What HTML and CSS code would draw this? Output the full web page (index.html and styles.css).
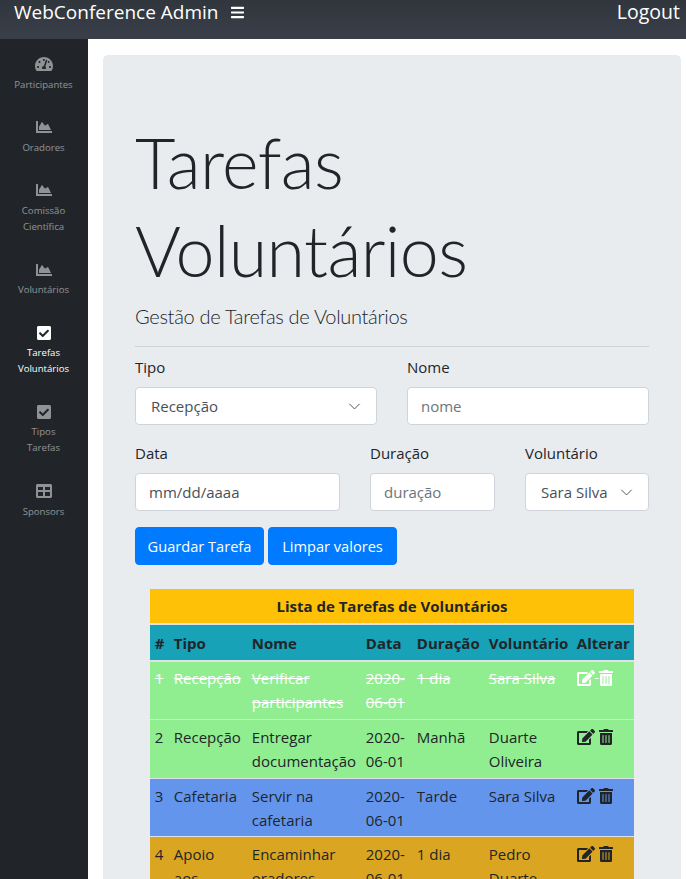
FILE: index.html
```html
<!DOCTYPE html>
<html lang="pt">
<head>
<meta charset="utf-8">
<title>Tarefas Voluntários</title>
<link rel="stylesheet" href="styles.css">
</head>
<body>
<svg class="defs" aria-hidden="true">
  <symbol id="i-bars" viewBox="0 0 448 512"><path d="M16 132h416c8.837 0 16-7.163 16-16V76c0-8.837-7.163-16-16-16H16C7.163 60 0 67.163 0 76v40c0 8.837 7.163 16 16 16zm0 160h416c8.837 0 16-7.163 16-16v-40c0-8.837-7.163-16-16-16H16c-8.837 0-16 7.163-16 16v40c0 8.837 7.163 16 16 16zm0 160h416c8.837 0 16-7.163 16-16v-40c0-8.837-7.163-16-16-16H16c-8.837 0-16 7.163-16 16v40c0 8.837 7.163 16 16 16z"/></symbol>
  <symbol id="i-gauge" viewBox="0 0 576 512"><path d="M288 32C128.94 32 0 160.94 0 320c0 52.8 14.25 102.26 39.06 144.8 5.61 9.62 16.3 15.2 27.44 15.2h443c11.14 0 21.83-5.58 27.44-15.2C561.75 422.26 576 372.8 576 320c0-159.06-128.94-288-288-288zm0 64c14.71 0 26.58 10.13 30.32 23.65-1.11 2.26-2.64 4.23-3.45 6.67l-9.22 27.67c-5.13 3.49-10.97 6.01-17.64 6.01-17.67 0-32-14.33-32-32S270.33 96 288 96zM96 384c-17.67 0-32-14.33-32-32s14.33-32 32-32 32 14.33 32 32-14.33 32-32 32zm48-160c-17.67 0-32-14.33-32-32s14.33-32 32-32 32 14.33 32 32-14.33 32-32 32zm246.77-72.41l-61.33 184C343.13 347.33 352 364.54 352 384c0 11.72-3.38 22.55-8.88 32H232.88c-5.5-9.45-8.88-20.28-8.88-32 0-33.94 26.5-61.43 59.9-63.59l61.34-184.01c4.17-12.56 17.73-19.45 30.36-15.17 12.57 4.19 19.35 17.79 15.17 30.36zm14.66 57.2l15.52-46.55c3.47-1.29 7.13-2.23 11.05-2.23 17.67 0 32 14.33 32 32s-14.33 32-32 32c-11.38-.01-20.89-6.28-26.57-15.22zM480 384c-17.67 0-32-14.33-32-32s14.33-32 32-32 32 14.33 32 32-14.33 32-32 32z"/></symbol>
  <symbol id="i-area" viewBox="0 0 512 512"><path d="M500 384c6.6 0 12 5.4 12 12v40c0 6.6-5.4 12-12 12H12c-6.6 0-12-5.4-12-12V76c0-6.6 5.4-12 12-12h40c6.6 0 12 5.4 12 12v308h436zM372.7 159.5L288 216l-85.3-113.7c-5.1-6.8-15.5-6.3-19.9 1L96 248v104h384l-89.9-187.8c-3.2-6.5-11.4-8.7-17.4-4.7z"/></symbol>
  <symbol id="i-check" viewBox="0 0 448 512"><path d="M400 480H48c-26.51 0-48-21.49-48-48V80c0-26.51 21.49-48 48-48h352c26.51 0 48 21.49 48 48v352c0 26.51-21.49 48-48 48zm-204.686-98.059l184-184c6.248-6.248 6.248-16.379 0-22.627l-22.627-22.627c-6.248-6.248-16.379-6.249-22.628 0L184 302.745l-70.059-70.059c-6.248-6.248-16.379-6.248-22.628 0L68.686 255.313c-6.249 6.248-6.249 16.379 0 22.627l104 104c6.249 6.25 16.379 6.25 22.628.001z"/></symbol>
  <symbol id="i-grid" viewBox="0 0 512 512"><path fill-rule="evenodd" d="M48 32h416c26.5 0 48 21.5 48 48v352c0 26.5-21.500 48-48 48H48c-26.500 0-48-21.500-48-48V80c0-26.500 21.500-48 48-48zM64 128v96h160v-96zm224 0v96h160v-96zM64 288v128h160V288zm224 0v128h160V288z"/></symbol>
  <symbol id="i-edit" viewBox="0 0 576 512"><path d="M402.6 83.2l90.2 90.2c3.8 3.8 3.8 10 0 13.8L274.4 405.6l-92.8 10.3c-12.4 1.4-22.9-9.1-21.5-21.5l10.3-92.8L388.8 83.2c3.8-3.8 10-3.8 13.8 0zm162-22.9l-48.8-48.8c-15.2-15.2-39.9-15.2-55.2 0l-35.4 35.4c-3.8 3.8-3.8 10 0 13.8l90.2 90.2c3.8 3.8 10 3.8 13.8 0l35.4-35.4c15.2-15.3 15.2-40 0-55.2zM384 346.2V448H64V128h229.8c3.2 0 6.2-1.3 8.5-3.5l40-40c7.6-7.6 2.2-20.5-8.5-20.5H48C21.5 64 0 85.5 0 112v352c0 26.5 21.5 48 48 48h352c26.5 0 48-21.5 48-48V306.2c0-10.7-12.9-16-20.5-8.5l-40 40c-2.2 2.3-3.5 5.3-3.5 8.5z"/></symbol>
  <symbol id="i-trash" viewBox="0 0 448 512"><path d="M32 464a48 48 0 0 0 48 48h288a48 48 0 0 0 48-48V128H32zm272-256a16 16 0 0 1 32 0v224a16 16 0 0 1-32 0zm-96 0a16 16 0 0 1 32 0v224a16 16 0 0 1-32 0zm-96 0a16 16 0 0 1 32 0v224a16 16 0 0 1-32 0zM432 32H312l-9.4-18.7A24 24 0 0 0 281.1 0H166.8a23.72 23.72 0 0 0-21.4 13.3L136 32H16A16 16 0 0 0 0 48v32a16 16 0 0 0 16 16h416a16 16 0 0 0 16-16V48a16 16 0 0 0-16-16z"/></symbol>
  <symbol id="i-chevron" viewBox="0 0 16 16"><path fill="none" stroke="#4b5157" stroke-width="1.2" stroke-linecap="round" stroke-linejoin="round" d="M2 5l6 6 6-6"/></symbol>
</svg>

<header class="topbar">
  <div class="brand-group">
    <span class="brand">WebConference Admin</span>
    <svg class="bars"><use href="#i-bars"/></svg>
  </div>
  <a class="logout">Logout</a>
</header>

<div class="shell">
  <nav class="sidebar">
    <a class="side-item"><svg class="side-icon"><use href="#i-gauge"/></svg><span>Participantes</span></a>
    <a class="side-item"><svg class="side-icon"><use href="#i-area"/></svg><span>Oradores</span></a>
    <a class="side-item"><svg class="side-icon"><use href="#i-area"/></svg><span>Comissão<br>Científica</span></a>
    <a class="side-item"><svg class="side-icon"><use href="#i-area"/></svg><span>Voluntários</span></a>
    <a class="side-item active"><svg class="side-icon"><use href="#i-check"/></svg><span>Tarefas<br>Voluntários</span></a>
    <a class="side-item"><svg class="side-icon"><use href="#i-check"/></svg><span>Tipos<br>Tarefas</span></a>
    <a class="side-item"><svg class="side-icon"><use href="#i-grid"/></svg><span>Sponsors</span></a>
  </nav>

  <main class="content">
    <section class="jumbotron">
      <h1 class="title">Tarefas Voluntários</h1>
      <p class="lead">Gestão de Tarefas de Voluntários</p>
      <hr class="rule">
      <form class="form">
        <div class="form-row row-two">
          <div class="field">
            <label class="label">Tipo</label>
            <div class="control select">Recepção<svg class="chevron"><use href="#i-chevron"/></svg></div>
          </div>
          <div class="field">
            <label class="label">Nome</label>
            <div class="control placeholder">nome</div>
          </div>
        </div>
        <div class="form-row row-three">
          <div class="field">
            <label class="label">Data</label>
            <div class="control date">mm/dd/aaaa</div>
          </div>
          <div class="field">
            <label class="label">Duração</label>
            <div class="control placeholder">duração</div>
          </div>
          <div class="field">
            <label class="label">Voluntário</label>
            <div class="control select">Sara Silva<svg class="chevron"><use href="#i-chevron"/></svg></div>
          </div>
        </div>
        <div class="actions">
          <button type="button" class="btn">Guardar Tarefa</button>
          <button type="button" class="btn">Limpar valores</button>
        </div>
      </form>

      <div class="table-wrap">
        <table class="tasks">
          <colgroup>
            <col class="c-num"><col class="c-tipo"><col class="c-nome"><col class="c-data"><col class="c-dur"><col class="c-vol"><col class="c-alt">
          </colgroup>
          <thead>
            <tr class="head-title"><th colspan="7">Lista de Tarefas de Voluntários</th></tr>
            <tr class="head-cols"><th>#</th><th>Tipo</th><th>Nome</th><th>Data</th><th>Duração</th><th>Voluntário</th><th>Alterar</th></tr>
          </thead>
          <tbody>
            <tr class="green done">
              <td>1</td><td>Recepção</td><td>Verificar participantes</td><td>2020-06-01</td><td>1 dia</td><td>Sara Silva</td>
              <td class="tools"><svg class="tool edit"><use href="#i-edit"/></svg> <svg class="tool trash"><use href="#i-trash"/></svg></td>
            </tr>
            <tr class="green">
              <td>2</td><td>Recepção</td><td>Entregar documentação</td><td>2020-06-01</td><td>Manhã</td><td>Duarte Oliveira</td>
              <td class="tools"><svg class="tool edit"><use href="#i-edit"/></svg> <svg class="tool trash"><use href="#i-trash"/></svg></td>
            </tr>
            <tr class="blue">
              <td>3</td><td>Cafetaria</td><td>Servir na cafetaria</td><td>2020-06-01</td><td>Tarde</td><td>Sara Silva</td>
              <td class="tools"><svg class="tool edit"><use href="#i-edit"/></svg> <svg class="tool trash"><use href="#i-trash"/></svg></td>
            </tr>
            <tr class="gold">
              <td>4</td><td>Apoio aos oradores</td><td>Encaminhar oradores</td><td>2020-06-01</td><td>1 dia</td><td>Pedro Duarte</td>
              <td class="tools"><svg class="tool edit"><use href="#i-edit"/></svg> <svg class="tool trash"><use href="#i-trash"/></svg></td>
            </tr>
          </tbody>
        </table>
      </div>
    </section>
  </main>
</div>
</body>
</html>
```

FILE: styles.css
```css
* { box-sizing: border-box; }

html, body {
  margin: 0;
  height: 879px;
  overflow: hidden;
}

body {
  font-family: "Open Sans", "Noto Sans", sans-serif;
  font-size: 15px;
  line-height: 24px;
  color: #212529;
  background: #fff;
}

.defs { display: none; }

.topbar {
  height: 39px;
  display: flex;
  justify-content: space-between;
  padding: 0 6px 15px 14px;
  background: linear-gradient(#30363c, #3a3f4a);
  color: #fff;
  font-size: 19px;
}

.brand-group {
  display: flex;
  gap: 13px;
  align-items: center;
}

.bars {
  width: 13px;
  height: 15px;
  fill: #fff;
}

.logout {
  color: #fff;
  font-size: 19.5px;
}

.shell {
  display: flex;
  height: 840px;
}

.sidebar {
  width: 88px;
  flex: none;
  background: #212529;
  padding: 17px 1px 0 0;
  display: flex;
  flex-direction: column;
  gap: 26.7px;
}

.side-item {
  display: flex;
  flex-direction: column;
  align-items: center;
  text-align: center;
  color: rgba(255, 255, 255, 0.5);
  font-size: 9.6px;
  line-height: 16px;
}

.side-item.active { color: #fff; }

.side-icon {
  width: 18px;
  height: 16px;
  margin-bottom: 4.5px;
  fill: currentColor;
}

.content {
  flex: 1;
  padding: 16px 5px 0 15px;
  min-width: 0;
}

.jumbotron {
  background: #e9ecef;
  border-radius: 5px;
  padding: 64px 32px 32px;
  height: 900px;
}

.title {
  margin: 0;
  font-family: Lato, "Open Sans", sans-serif;
  font-size: 70px;
  font-weight: 300;
  letter-spacing: -0.6px;
  line-height: 87.5px;
}

.lead {
  margin: 7px 0 0;
  font-family: Lato, "Open Sans", sans-serif;
  font-size: 20px;
  font-weight: 300;
  letter-spacing: -0.3px;
  line-height: 30px;
}

.rule {
  margin: 15px 0 8px;
  border: 0;
  border-top: 1px solid #ced1d5;
}

.form-row {
  display: grid;
  column-gap: 30px;
  margin-bottom: 16px;
}

.row-two { grid-template-columns: 242px 242px; }
.row-three { grid-template-columns: 205px 125px 124px; }

.label {
  display: block;
  margin-bottom: 8px;
}

.control {
  height: 38px;
  padding: 6px 15px;
  background: #fff;
  border: 1px solid #ced4da;
  border-radius: 4px;
  color: #495057;
  display: flex;
  align-items: center;
  justify-content: space-between;
}

.placeholder { padding-left: 13px; color: #6c757d; }
.date { padding-left: 13px; }

.chevron {
  width: 13px;
  height: 13px;
  flex: none;
}

.actions {
  display: flex;
  gap: 4px;
}

.btn {
  width: 129px;
  height: 38px;
  padding: 0;
  background: #007bff;
  border: 1px solid #007bff;
  border-radius: 4px;
  color: #fff;
  font: inherit;
  font-size: 14.6px;
}

.table-wrap {
  margin-top: 24px;
  padding: 0 15px;
}

.tasks {
  width: 484px;
  table-layout: fixed;
  border-collapse: collapse;
}

.c-num { width: 19px; }
.c-tipo { width: 78px; }
.c-nome { width: 114px; }
.c-data { width: 51px; }
.c-dur { width: 72px; }
.c-vol { width: 88px; }
.c-alt { width: 62px; }

.tasks th,
.tasks td {
  padding: 4.8px;
  text-align: left;
  vertical-align: top;
  border-top: 1px solid #dee2e6;
}

.tasks thead th { border-bottom: 2px solid #dee2e6; vertical-align: bottom; }

.tasks .head-title th {
  background: #ffc107;
  text-align: center;
  border-top: 0;
}

.tasks .head-cols th {
  background: #17a2b8;
  padding-top: 6.3px;
  padding-bottom: 4.8px;
}

.green td { background: #90ee90; }
.blue td { background: #6495ed; }
.gold td { background: #daa520; }

.done td {
  color: #fff;
  text-decoration: line-through;
}

.tool {
  height: 16px;
  fill: #212529;
  vertical-align: -2px;
}

.edit { width: 18px; }
.trash { width: 14px; }

.done .tool { fill: #fff; }
```
